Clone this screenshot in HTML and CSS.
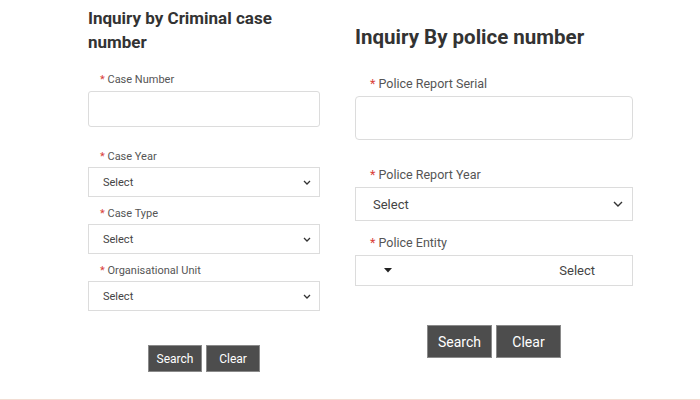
FILE: index.html
```html
<!DOCTYPE html>
<html>
<head>
<meta charset="utf-8">
<link rel="stylesheet" href="styles.css">
</head>
<body>
<div class="page">
  <div class="col col-left">
    <h2 class="title title-left">Inquiry by Criminal case number</h2>
    <div class="label l1"><span class="req">*</span> Case Number</div>
    <div class="input in-left"></div>
    <div class="label l2"><span class="req">*</span> Case Year</div>
    <div class="select sel-left"><span>Select</span><svg width="8" height="5" viewBox="0 0 8 5"><polyline points="1,1 4,4 7,1" fill="none" stroke="#333" stroke-width="1.3"/></svg></div>
    <div class="label l3"><span class="req">*</span> Case Type</div>
    <div class="select sel-left"><span>Select</span><svg width="8" height="5" viewBox="0 0 8 5"><polyline points="1,1 4,4 7,1" fill="none" stroke="#333" stroke-width="1.3"/></svg></div>
    <div class="label l3"><span class="req">*</span> Organisational Unit</div>
    <div class="select sel-left"><span>Select</span><svg width="8" height="5" viewBox="0 0 8 5"><polyline points="1,1 4,4 7,1" fill="none" stroke="#333" stroke-width="1.3"/></svg></div>
    <div class="buttons btn-left">
      <button class="btn">Search</button>
      <button class="btn">Clear</button>
    </div>
  </div>
  <div class="col col-right">
    <h2 class="title title-right">Inquiry By police number</h2>
    <div class="label r1"><span class="req">*</span> Police Report Serial</div>
    <div class="input in-right"></div>
    <div class="label r2"><span class="req">*</span> Police Report Year</div>
    <div class="select sel-right"><span>Select</span><svg width="10" height="6" viewBox="0 0 10 6"><polyline points="1,1 5,5 9,1" fill="none" stroke="#333" stroke-width="1.4"/></svg></div>
    <div class="label r3"><span class="req">*</span> Police Entity</div>
    <div class="select sel-entity"><svg width="8" height="5" viewBox="0 0 8 5"><polygon points="0,0 8,0 4,4.5" fill="#222"/></svg><span>Select</span></div>
    <div class="buttons btn-right">
      <button class="btn">Search</button>
      <button class="btn">Clear</button>
    </div>
  </div>
</div>
</body>
</html>
```
FILE: styles.css
```css
* { box-sizing: border-box; }
html, body { margin: 0; padding: 0; background: #fff; }
body { font-family: Roboto, "Liberation Sans", sans-serif; color: #333; }
.page {
  height: 400px;
  border-bottom: 1px solid #f2dcd2;
  display: flex;
  padding-left: 88px;
  gap: 35px;
}
.col { display: flex; flex-direction: column; }
.col-left { width: 232px; }
.col-right { width: 278px; }
.title { margin: 0; font-weight: 700; color: #333; }
.title-left { font-size: 17px; line-height: 24px; margin-top: 6px; width: 205px; }
.title-right { font-size: 20.5px; line-height: 28px; margin-top: 23px; }
.label { color: #555; }
.req { color: #d9403a; }
.col-left .label { font-size: 11px; line-height: 14px; padding-left: 12px; margin-bottom: 3px; }
.col-right .label { font-size: 12.5px; line-height: 16px; padding-left: 15px; margin-bottom: 4px; }
.l1 { margin-top: 19px; }
.l1 { margin-bottom: 4px !important; }
.l2 { margin-top: 23px; }
.l3 { margin-top: 10px; }
.r1 { margin-top: 25px; }
.r2 { margin-top: 27px; }
.r3 { margin-top: 14px; }
.input { border: 1px solid #dcdcdc; border-radius: 3px; background: #fff; }
.in-left { height: 36px; }
.in-right { height: 44px; border-radius: 4px; }
.select {
  border: 1px solid #dcdcdc;
  display: flex;
  align-items: center;
  justify-content: space-between;
  color: #444;
}
.sel-left { height: 30px; font-size: 11px; padding: 0 8px 0 14px; }
.sel-right { height: 34px; font-size: 13px; padding: 0 9px 0 17px; }
.sel-entity { height: 31px; font-size: 13px; padding: 0 37px 0 28px; }
.buttons { display: flex; justify-content: center; gap: 4px; }
.btn-left { margin-top: 34px; }
.btn-right { margin-top: 39px; }
.btn {
  background: #4d4d4d;
  color: #fff;
  border: 1px solid #8a8a8a;
  font-family: Roboto, "Liberation Sans", sans-serif;
  padding: 0;
  cursor: pointer;
}
.btn-left .btn { width: 54px; height: 27px; font-size: 12px; }
.btn-right .btn { width: 65px; height: 33px; font-size: 14px; }
```
